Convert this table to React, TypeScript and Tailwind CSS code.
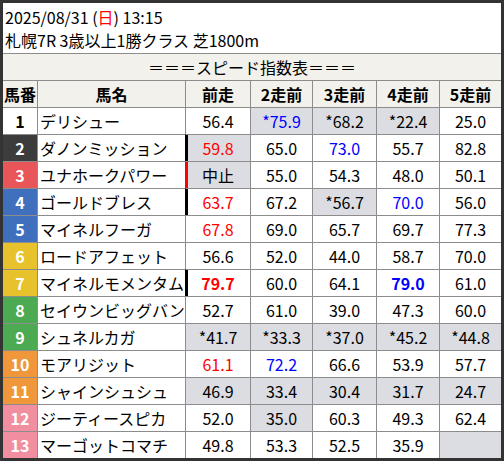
import React from "react";

type Cell = { v: string; c?: "r" | "b"; bold?: boolean; gray?: boolean };

type Row = {
  no: number;
  name: string;
  badge: string;
  bar?: string;
  cells: Cell[];
};

const rows: Row[] = [
  {
    no: 1,
    name: "デリシュー",
    badge: "bg-white text-black",
    cells: [
      { v: "56.4" },
      { v: "*75.9", c: "b", gray: true },
      { v: "*68.2", gray: true },
      { v: "*22.4", gray: true },
      { v: "25.0" },
    ],
  },
  {
    no: 2,
    name: "ダノンミッション",
    badge: "bg-[#3c3c3c] text-white",
    bar: "shadow-[inset_2px_0_0_#000] border-l-black",
    cells: [
      { v: "59.8", c: "r", gray: true },
      { v: "65.0" },
      { v: "73.0", c: "b" },
      { v: "55.7" },
      { v: "82.8" },
    ],
  },
  {
    no: 3,
    name: "ユナホークパワー",
    badge: "bg-[#e85659] text-white",
    bar: "shadow-[inset_2px_0_0_#f00] border-l-[#f00]",
    cells: [
      { v: "中止", gray: true },
      { v: "55.0" },
      { v: "54.3" },
      { v: "48.0" },
      { v: "50.1" },
    ],
  },
  {
    no: 4,
    name: "ゴールドブレス",
    badge: "bg-[#406fbe] text-white",
    bar: "shadow-[inset_2px_0_0_#000] border-l-black",
    cells: [
      { v: "63.7", c: "r" },
      { v: "67.2" },
      { v: "*56.7", gray: true },
      { v: "70.0", c: "b" },
      { v: "56.0" },
    ],
  },
  {
    no: 5,
    name: "マイネルフーガ",
    badge: "bg-[#406fbe] text-white",
    cells: [
      { v: "67.8", c: "r" },
      { v: "69.0" },
      { v: "65.7" },
      { v: "69.7" },
      { v: "77.3" },
    ],
  },
  {
    no: 6,
    name: "ロードアフェット",
    badge: "bg-[#e7c22c] text-white",
    cells: [
      { v: "56.6" },
      { v: "52.0" },
      { v: "44.0" },
      { v: "58.7" },
      { v: "70.0" },
    ],
  },
  {
    no: 7,
    name: "マイネルモメンタム",
    badge: "bg-[#e7c22c] text-white",
    bar: "shadow-[inset_2px_0_0_#000] border-l-black",
    cells: [
      { v: "79.7", c: "r", bold: true },
      { v: "60.0" },
      { v: "64.1" },
      { v: "79.0", c: "b", bold: true },
      { v: "61.0" },
    ],
  },
  {
    no: 8,
    name: "セイウンビッグバン",
    badge: "bg-[#4caa52] text-white",
    cells: [
      { v: "52.7" },
      { v: "61.0" },
      { v: "39.0" },
      { v: "47.3" },
      { v: "60.0" },
    ],
  },
  {
    no: 9,
    name: "シュネルカガ",
    badge: "bg-[#4caa52] text-white",
    cells: [
      { v: "*41.7", gray: true },
      { v: "*33.3", gray: true },
      { v: "*37.0", gray: true },
      { v: "*45.2", gray: true },
      { v: "*44.8", gray: true },
    ],
  },
  {
    no: 10,
    name: "モアリジット",
    badge: "bg-[#f0963b] text-white",
    cells: [
      { v: "61.1", c: "r" },
      { v: "72.2", c: "b" },
      { v: "66.6" },
      { v: "53.9" },
      { v: "57.7" },
    ],
  },
  {
    no: 11,
    name: "シャインシュシュ",
    badge: "bg-[#f0963b] text-white",
    cells: [
      { v: "46.9", gray: true },
      { v: "33.4", gray: true },
      { v: "30.4", gray: true },
      { v: "31.7", gray: true },
      { v: "24.7", gray: true },
    ],
  },
  {
    no: 12,
    name: "ジーティースピカ",
    badge: "bg-[#f18fa0] text-white",
    cells: [
      { v: "52.0" },
      { v: "35.0", gray: true },
      { v: "60.3" },
      { v: "49.3" },
      { v: "62.4" },
    ],
  },
  {
    no: 13,
    name: "マーゴットコマチ",
    badge: "bg-[#f18fa0] text-white",
    cells: [
      { v: "49.8" },
      { v: "53.3" },
      { v: "52.5" },
      { v: "35.9" },
      { v: "", gray: true },
    ],
  },
];

const heads = ["前走", "2走前", "3走前", "4走前", "5走前"];

const base = "h-[27px] border-t border-[#8c8c8c] flex items-center";

export default function App() {
  return (
    <div
      className="w-[504px] h-[461px] border-[3px] border-[#333] bg-white text-black overflow-hidden"
      style={{ fontFamily: '"Noto Sans CJK JP", "Noto Sans", sans-serif' }}
    >
      <div className="h-[50px] px-[2px] pt-[3px] text-[16px] leading-[23px]">
        <div>
          2025/08/31 (<span className="text-[#f00]">日</span>) 13:15
        </div>
        <div>札幌7R 3歳以上1勝クラス 芝1800m</div>
      </div>
      <div className="grid grid-cols-[34px_148px_65px_62px_64px_63px_62px] text-[16px]">
        <div className={`${base} col-span-7 justify-center bg-[#f2f1ec]`}>
          ＝＝＝スピード指数表＝＝＝
        </div>
        <div className={`${base} justify-center bg-[#f2f1ec] font-bold`}>馬番</div>
        <div className={`${base} border-l justify-center bg-[#f2f1ec] font-bold`}>馬名</div>
        {heads.map((h) => (
          <div
            key={h}
            className={`${base} border-l justify-center bg-[#f2f1ec] font-bold`}
          >
            {h}
          </div>
        ))}
        {rows.map((r) => (
          <React.Fragment key={r.no}>
            <div className={`${base} justify-center font-bold ${r.badge}`}>{r.no}</div>
            <div className={`${base} border-l pl-[2px] whitespace-nowrap`}>{r.name}</div>
            {r.cells.map((c, i) => (
              <div
                key={i}
                className={`${base} border-l justify-center ${
                  c.gray ? "bg-[#dcdde2]" : "bg-white"
                } ${c.c === "r" ? "text-[#f00]" : c.c === "b" ? "text-[#00f]" : ""} ${
                  c.bold ? "font-bold" : ""
                } ${i === 0 && r.bar ? r.bar : ""}`}
              >
                {c.v}
              </div>
            ))}
          </React.Fragment>
        ))}
      </div>
    </div>
  );
}
